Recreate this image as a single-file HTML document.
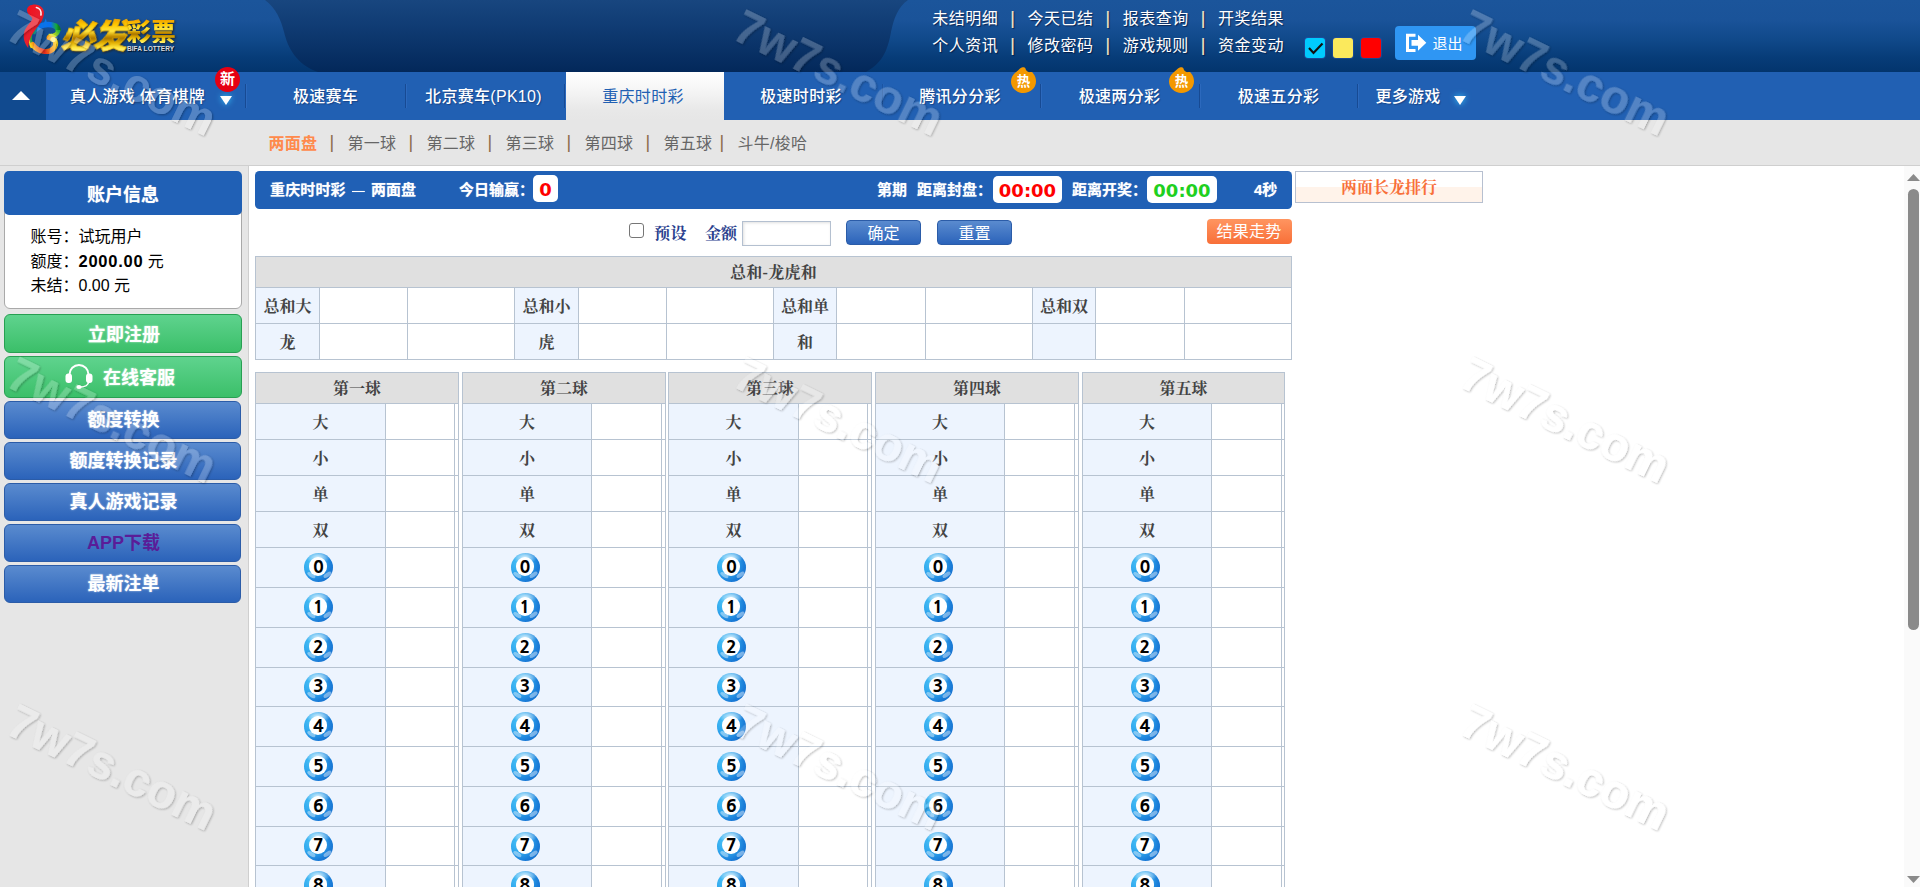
<!DOCTYPE html>
<html lang="zh-CN"><head><meta charset="utf-8"><title>必发彩票</title>
<style>
*{box-sizing:border-box;margin:0;padding:0}
html,body{width:1920px;height:887px;overflow:hidden;background:#fff}
body{font-family:"Liberation Sans","Noto Sans CJK SC",sans-serif;font-size:16px;color:#333;position:relative}
.abs{position:absolute}
#hd{position:absolute;left:0;top:0;width:1920px;height:72px;overflow:hidden}
#hd svg{position:absolute}
.toplinks{position:absolute;left:932.300px;top:4.600px;color:#fff;font-size:16px;line-height:27px;letter-spacing:.500px;white-space:nowrap;text-shadow:1px 1px 1px rgba(0,0,30,.55)}
.toplinks span.s{display:inline-block;width:29.200px;text-align:center;color:#f6e6c8;letter-spacing:0;font-size:17.500px;line-height:20px;-webkit-text-stroke:.150px #f6e6c8;position:relative;top:.500px;left:-.300px}
.sw{position:absolute;top:38px;width:20px;height:20px;border-radius:3px;box-shadow:0 0 0 1px rgba(40,80,170,.55)}
#logout{position:absolute;left:1395px;top:26px;width:81px;height:34px;border-radius:4px;background:#2f96f3;color:#fff;font-size:15px;line-height:36px}
#nav{position:absolute;left:0;top:72px;width:1920px;height:48px;background:#2160b3}
#nav .tg{position:absolute;left:0;top:0;width:46px;height:48px;background:#114a8f}
#nav .it{position:absolute;top:0;height:48px;line-height:49px;color:#fff;font-size:16px;font-weight:500;letter-spacing:.3px;text-align:center;white-space:nowrap;text-shadow:1px 1px 1px rgba(0,0,40,.3)}
#nav .sep{position:absolute;top:12px;width:2px;height:24px;background:#174a93;border-right:1px solid #2c69bd}
#nav .it.act{font-weight:400;background:linear-gradient(#ffffff 0%,#f6f6f6 35%,#e8e8e8 80%,#e6e6e6 100%);color:#2160b3;text-shadow:none}
#sub{position:absolute;left:0;top:120px;width:1920px;height:46px;background:#e6e6e6;border-bottom:1px solid #cfcfcf}
#sub .t{position:absolute;top:0;line-height:48px;font-size:16px;color:#666;white-space:nowrap;letter-spacing:.250px;margin-left:-.500px}
#side{position:absolute;left:0;top:166px;width:249px;height:721px;background:#e6e6e6;border-right:1px solid #cfcfcf}
#main{position:absolute;left:249px;top:166px;width:1671px;height:721px;background:#fff;overflow:hidden}

#logo .bf{font-family:"Noto Sans CJK SC",sans-serif;font-weight:900;font-size:33px;line-height:33px;letter-spacing:-2.200px;transform:skewX(-13deg) scaleX(1.050);transform-origin:0 100%;background:linear-gradient(#ee9800 0%,#ffc800 20%,#ffe640 40%,#c89200 55%,#a87400 62%,#e0ac00 74%,#ffe640 90%,#fff27a 100%);-webkit-background-clip:text;background-clip:text;color:transparent;-webkit-text-stroke:.700px rgba(236,176,0,.850);filter:drop-shadow(1px 1.500px .800px rgba(40,20,0,.700));white-space:nowrap}
#logo .cp{font-family:"Noto Sans CJK SC",sans-serif;font-weight:900;font-size:24.500px;line-height:24.500px;letter-spacing:.300px;background:linear-gradient(#ee9800 0%,#ffc800 22%,#ffe640 42%,#c89200 56%,#a87400 63%,#e0ac00 76%,#ffe640 92%,#fff27a 100%);-webkit-background-clip:text;background-clip:text;color:transparent;filter:drop-shadow(1px 1px .800px rgba(40,20,0,.700));white-space:nowrap}
#logo .en{font-family:"Liberation Sans",sans-serif;font-weight:bold;font-size:6.500px;line-height:7px;color:#dcdcdc;letter-spacing:.050px;white-space:nowrap;text-shadow:1px 1px 1px rgba(0,0,0,.800)}

.bnew{width:25px;height:25px;border-radius:50%;background:#e60012;color:#fff;font-weight:bold;font-size:15px;line-height:24px;text-align:center}
.bhot{width:25px;height:26px}
.bhot span{position:absolute;left:0;top:5px;width:25px;text-align:center;color:#fff;font-weight:bold;font-size:13.5px;line-height:20px}

.acc{position:absolute;left:4px;top:5px;width:238px;height:138px}
.acch{position:absolute;left:0;top:0;width:238px;height:44px;background:#2060b5;border-radius:5px;color:#fff;font-weight:bold;font-size:18px;line-height:48px;text-align:center;z-index:2;text-shadow:0 0 1px rgba(255,255,255,.6)}
.accb{position:absolute;left:0;top:38px;width:238px;height:100px;background:#fff;border:1px solid #a9a9a9;border-radius:0 0 6px 6px;padding:14.8px 0 0 25.5px;font-size:16px;line-height:24.6px;color:#000}
.accb div{height:24.6px;white-space:nowrap}
.accb b{font-size:16.5px;letter-spacing:.75px}
.gbtn{position:absolute;left:4px;width:238px;border:1px solid #27a052;border-radius:6px;background:linear-gradient(#5fd38e,#3bbf69);color:#fff;font-weight:bold;font-size:18px;text-align:center;text-shadow:0 0 2px rgba(255,255,255,.7)}
.bbtn{position:absolute;left:4px;width:237px;height:38px;border:1px solid #2b5ca8;border-radius:6px;background:linear-gradient(#5a8bcf,#2b63ba);color:#fff;font-weight:bold;font-size:18px;line-height:36.400px;text-indent:2px;text-align:center;text-shadow:0 0 2px rgba(255,255,255,.7)}

.tbar{position:absolute;background:#2060b5;border-radius:4.500px;color:#fff}
.tbar .tt{position:absolute;top:0;line-height:37.400px;font-size:15px;font-weight:bold;white-space:nowrap;text-shadow:0 0 1px rgba(255,255,255,.6)}
.tbar .wb{position:absolute;background:#fff;border-radius:5px;font-family:"DejaVu Sans","Liberation Sans",sans-serif;font-weight:bold;font-size:18px;line-height:29.6px;text-align:center}
.cbx{position:absolute;width:15px;height:15px;border:1.5px solid #767676;border-radius:3px;background:#fff}
.lbl{position:absolute;font-family:"Liberation Serif","Noto Serif CJK SC",serif;font-weight:bold;font-size:16px;line-height:24px;color:#2b3f8e;white-space:nowrap}
.inp{position:absolute;width:89px;height:25px;border:1px solid #b4c0d0;background:#fff;box-shadow:inset 1px 1px 3px rgba(0,0,0,.12)}
.btn{position:absolute;width:75px;height:25px;border:1px solid #2b5ca8;border-radius:4px;background:linear-gradient(#5a8bcf,#2b63ba);color:#fff;font-size:16px;line-height:25.5px;text-align:center}
.obtn{position:absolute;width:85px;height:25px;border-radius:4px;background:linear-gradient(#ff9560,#f86f38);color:#fff;font-size:16px;line-height:25px;text-align:center;letter-spacing:.300px;text-indent:-1px}
.tb{position:absolute;border:1px solid #b7c3d1;background:#fff;overflow:hidden;font-family:"Liberation Serif","Noto Serif CJK SC",serif;font-weight:bold;font-size:16px;color:#444}
.tb div{position:absolute}
.th{background:#e0e0e0;text-align:center}
.hl{height:1px;background:#b7c3d1}
.vl{width:1px;background:#b7c3d1}
.lc{background:#edf4fe;text-align:center;white-space:nowrap}
.lcb{background:#edf4fe}
.lt{height:35px;line-height:37px;text-align:center}
.ball{width:29.4px;height:29.2px;border-radius:50%;background:radial-gradient(ellipse 12px 6.500px at 14px 4.500px,rgba(255,255,255,.780) 0,rgba(255,255,255,.350) 60%,rgba(255,255,255,0) 100%),radial-gradient(circle at 28% 34%,#49c2f7 0,#2fa6ed 38%,#1a7cd8 68%,#0f62c2 100%)}
.ball::before,.ball::after{content:"";position:absolute;top:20px;width:8.500px;height:3.600px;border-radius:50%;background:rgba(255,255,255,.420)}
.ball::before{left:2.500px;transform:rotate(33deg)}
.ball::after{left:18.500px;transform:rotate(-33deg)}
.ball i{position:absolute;left:5.200px;top:4.200px;width:18.200px;height:18.400px;border-radius:50%;background:#fff}
.ball span{position:absolute;left:0;top:4.600px;width:28.400px;height:19px;line-height:19px;text-align:center;font-family:"NanumGothic","Liberation Sans",sans-serif;font-weight:800;font-size:17.500px;color:#000}
.rp{position:absolute;width:188px;height:32px;border:1px solid #b7c0d0;background:linear-gradient(#fff 0,#fff 50%,#fff3ea 50%,#fff3ea 100%);font-family:"Liberation Serif","Noto Serif CJK SC",serif;font-weight:bold;font-size:16px;line-height:32px;text-align:center;color:#f8703a}
.sbt{position:absolute;width:16px;height:721px;background:#fafafa}
.sbth{position:absolute;width:11px;height:441px;border-radius:6px;background:#8a8a8a}
</style></head><body>
<div id="hd">
<svg width="1920" height="72" viewBox="0 0 1920 72">
<defs>
<linearGradient id="gd" x1="0" y1="0" x2="0" y2="1"><stop offset="0" stop-color="#18467f"/><stop offset="0.35" stop-color="#103c74"/><stop offset="1" stop-color="#03285a"/></linearGradient>
<linearGradient id="gl" x1="0" y1="0" x2="0" y2="1"><stop offset="0" stop-color="#1b559b"/><stop offset="0.28" stop-color="#1a5399"/><stop offset="0.55" stop-color="#10498a"/><stop offset="0.8" stop-color="#073c78"/><stop offset="1" stop-color="#03356d"/></linearGradient>
</defs>
<rect width="1920" height="72" fill="url(#gd)"/>
<path d="M0 0H265C276 8 281 20 284 32C288 48 296 64 318 72H0Z" fill="url(#gl)"/>
<path d="M1920 0H908C898 7 894 18 891 32C888 48 884 62 866 72H1920Z" fill="url(#gl)"/>
</svg>
<div id="logo">
<svg class="abs" style="left:20px;top:0" width="48" height="58" viewBox="0 0 48 58">
<defs>
<linearGradient id="lr" x1="0" y1="0" x2="1" y2="1"><stop offset="0" stop-color="#f40a18"/><stop offset="0.5" stop-color="#e8202e"/><stop offset="1" stop-color="#d80010"/></linearGradient>
<linearGradient id="rb1" gradientUnits="userSpaceOnUse" x1="12" y1="0" x2="39" y2="0"><stop offset="0" stop-color="#1f9a2e"/><stop offset="0.25" stop-color="#0a74ea"/><stop offset="0.7" stop-color="#0a6ff0"/><stop offset="0.9" stop-color="#18a83a"/><stop offset="1" stop-color="#0d7a20"/></linearGradient>
<linearGradient id="rb2" gradientUnits="userSpaceOnUse" x1="38" y1="30" x2="28" y2="38"><stop offset="0" stop-color="#2fb43a"/><stop offset="0.5" stop-color="#c8e01c"/><stop offset="1" stop-color="#fff04a"/></linearGradient>
<linearGradient id="rb3" gradientUnits="userSpaceOnUse" x1="36" y1="36" x2="10" y2="46"><stop offset="0" stop-color="#ffe61e"/><stop offset="0.3" stop-color="#f59a14"/><stop offset="0.6" stop-color="#e8281e"/><stop offset="0.85" stop-color="#f08a18"/><stop offset="1" stop-color="#ffe61e"/></linearGradient>
</defs>
<path d="M10.500 35C9 39 9.500 44 11.500 48" stroke="#f4d818" stroke-width="1.600" fill="none"/>
<path d="M12 33C10.500 37 11 41 12.500 44" stroke="#28a838" stroke-width="1.600" fill="none"/>
<path d="M12.500 33.500C15 27.500 22 24.500 28 24.500C33.500 24.500 38 26.500 38.200 30.800" stroke="url(#rb1)" stroke-width="5.600" fill="none"/>
<path d="M25.800 18.500L28 26L22.500 26.500Z" fill="#0a74ea"/>
<path d="M38.200 30C38 34.500 33.500 36.200 28.500 36" stroke="url(#rb2)" stroke-width="4.400" fill="none"/>
<path d="M29 37.500C36 38.500 37.500 44 33.500 48.500C29 53.500 18 52.500 12.500 44.500" stroke="url(#rb3)" stroke-width="5" fill="none" stroke-linecap="round"/>
<circle cx="33" cy="39.500" r="2.600" fill="#fff8a0" opacity=".9"/>
<path d="M7 11C6.500 6.500 10.500 4.500 15 4.500C20 4.500 24.300 8 24 13.500C23.600 19.500 19.500 24.500 15.500 29.500C11.500 34.500 8.800 40 8.200 48C4.500 43.500 3 38 4 33C5.300 27 10 23.500 12.200 19.500C13 17 8 15.500 7 11Z" fill="url(#lr)"/>
<path d="M16.500 7.500C19.500 8 21.500 11 21 15" stroke="#fff" stroke-width="1.700" fill="none" stroke-linecap="round" opacity=".92"/>
</svg>
<div class="abs bf" style="left:60px;top:18.200px">必发</div>
<div class="abs cp" style="left:126.500px;top:18.500px">彩票</div>
<div class="abs en" style="left:127px;top:44.500px">BIFA LOTTERY</div>
</div>
<div class="toplinks">未结明细<span class="s">|</span>今天已结<span class="s">|</span>报表查询<span class="s">|</span>开奖结果<br>个人资讯<span class="s">|</span>修改密码<span class="s">|</span>游戏规则<span class="s">|</span>资金变动</div>
<div class="sw" style="left:1305px;background:#00cbff"><svg width="20" height="20" viewBox="0 0 20 20" style="position:absolute;left:0;top:0"><path d="M4 10L8.500 15L17.500 5.500" stroke="#111" stroke-width="2.200" fill="none"/></svg></div>
<div class="sw" style="left:1333px;background:#fbe95c"></div>
<div class="sw" style="left:1361px;background:#ff0000"></div>
<div id="logout"><svg class="abs" style="left:10px;top:7px" width="22" height="20" viewBox="0 0 22 20"><path d="M10.500 2.200H2.500V17.500H10.500" stroke="#fff" stroke-width="3" fill="none"/><path d="M6.500 7H13V1.800L21.300 9.800L13 17.800V12.800H6.500Z" fill="#fff"/></svg><span class="abs" style="left:37.500px;top:0">退出</span></div>
</div>
<div id="nav">
<div class="tg"><svg class="abs" style="left:12px;top:19px" width="18" height="9" viewBox="0 0 18 9"><path d="M0 9L9 0L18 9Z" fill="#fff"/></svg></div>
<div class="it" style="left:46px;width:200px"><span style="position:relative;left:-8.5px">真人游戏 体育棋牌</span></div>
<div class="it" style="left:246px;width:159px"><span style="position:relative;left:0px">极速赛车</span></div>
<div class="it" style="left:405px;width:161px"><span style="position:relative;left:-2px">北京赛车(PK10)</span></div>
<div class="it act" style="left:566px;width:158px"><span style="position:relative;left:-2px">重庆时时彩</span></div>
<div class="it" style="left:724px;width:158px"><span style="position:relative;left:-2px">极速时时彩</span></div>
<div class="it" style="left:882px;width:158px"><span style="position:relative;left:-1px">腾讯分分彩</span></div>
<div class="it" style="left:1040px;width:159px"><span style="position:relative;left:0px">极速两分彩</span></div>
<div class="it" style="left:1199px;width:159px"><span style="position:relative;left:0px">极速五分彩</span></div>
<div class="it" style="left:1358px;width:160px"><span style="position:relative;left:-30px">更多游戏</span></div>
<div class="sep" style="left:245px"></div>
<div class="sep" style="left:405px"></div>
<div class="sep" style="left:564px"></div>
<div class="sep" style="left:1040px"></div>
<div class="sep" style="left:1199px"></div>
<div class="sep" style="left:1357px"></div>
<div class="sep" style="left:882px;opacity:.5"></div>
<svg class="abs" style="left:220px;top:24px;filter:drop-shadow(0 0 3px #35c6ff)" width="12" height="9" viewBox="0 0 12 9"><path d="M0 0H12L6 9Z" fill="#fff"/></svg>
<svg class="abs" style="left:1454px;top:24px;filter:drop-shadow(0 0 3px #35c6ff)" width="12" height="9" viewBox="0 0 12 9"><path d="M0 0H12L6 9Z" fill="#fff"/></svg>
<div class="abs bnew" style="left:215px;top:-5px">新</div>
<div class="abs bhot" style="left:1011px;top:-5px"><svg class="abs" style="left:0;top:0" width="25" height="26" viewBox="0 0 25 26"><path d="M12.500 26C5.600 26 0 20.800 0 14.500C0 10.500 2 7.500 4.500 5.500C6 4.300 7.500 3 9 1.500C10.500 0.300 12.500 0 13.500 0.400C14.800 1 14.600 2.600 15.600 3.800C16.600 5 18 5.400 19.400 5C20.600 4.700 21.600 5 22 6.200C24 8.400 25 11.400 25 14.500C25 20.800 19.400 26 12.500 26Z" fill="#f39800"/></svg><span>热</span></div>
<div class="abs bhot" style="left:1169px;top:-5px"><svg class="abs" style="left:0;top:0" width="25" height="26" viewBox="0 0 25 26"><path d="M12.500 26C5.600 26 0 20.800 0 14.500C0 10.500 2 7.500 4.500 5.500C6 4.300 7.500 3 9 1.500C10.500 0.300 12.500 0 13.500 0.400C14.800 1 14.600 2.600 15.600 3.800C16.600 5 18 5.400 19.400 5C20.600 4.700 21.600 5 22 6.200C24 8.400 25 11.400 25 14.500C25 20.800 19.400 26 12.500 26Z" fill="#f39800"/></svg><span>热</span></div>
</div>
<div id="sub">
<span class="t" style="left:269px;color:#ff8a4c;font-weight:bold">两面盘</span>
<span class="t" style="left:348px">第一球</span>
<span class="t" style="left:427px">第二球</span>
<span class="t" style="left:506px">第三球</span>
<span class="t" style="left:585px">第四球</span>
<span class="t" style="left:664px">第五球</span>
<span class="t" style="left:330.0px;color:#8a6a4a;font-size:18px;line-height:44px">|</span>
<span class="t" style="left:409.0px;color:#8a6a4a;font-size:18px;line-height:44px">|</span>
<span class="t" style="left:488.0px;color:#8a6a4a;font-size:18px;line-height:44px">|</span>
<span class="t" style="left:567.0px;color:#8a6a4a;font-size:18px;line-height:44px">|</span>
<span class="t" style="left:646.0px;color:#8a6a4a;font-size:18px;line-height:44px">|</span>
<span class="t" style="left:720.0px;color:#8a6a4a;font-size:18px;line-height:44px">|</span>
<span class="t" style="left:738px">斗牛/梭哈</span>
</div>
<div id="side">
<div class="acc"><div class="acch">账户信息</div><div class="accb"><div>账号：<span>试玩用户</span></div><div>额度：<span><b>2000.00</b> 元</span></div><div>未结：<span>0.00 元</span></div></div></div>
<div class="gbtn" style="top:148px;height:39px;line-height:40.500px;text-indent:2px">立即注册</div>
<div class="gbtn" style="top:190px;height:42px;line-height:43.500px"><svg class="abs" style="left:60px;top:6px" width="28" height="27" viewBox="0 0 28 27"><path d="M4.5 13V11.5A9.5 9.5 0 0 1 23.5 11.5V13" stroke="#fff" stroke-width="1.900" fill="none"/><rect x="0.5" y="10.5" width="6.5" height="9.5" rx="3" fill="#fff"/><rect x="21" y="10.5" width="6.5" height="9.5" rx="3" fill="#fff"/><path d="M23.5 19C23.5 22 20 24 15 24" stroke="#fff" stroke-width="1.6" fill="none"/><ellipse cx="14" cy="24" rx="2.6" ry="1.9" fill="#fff"/></svg><span style="position:relative;left:16px">在线客服</span></div>
<div class="bbtn" style="top:235px">额度转换</div>
<div class="bbtn" style="top:276px">额度转换记录</div>
<div class="bbtn" style="top:317px">真人游戏记录</div>
<div class="bbtn" style="top:358px;color:#5a1d98;text-shadow:none">APP下载</div>
<div class="bbtn" style="top:399px">最新注单</div>
</div>
<div id="main">
<div class="tbar" style="left:6px;top:5px;width:1037px;height:38px">
<span class="tt" style="left:15px;letter-spacing:.15px">重庆时时彩</span>
<span class="tt" style="left:96.500px;font-weight:normal;transform:scaleX(.85);transform-origin:0 50%">—</span>
<span class="tt" style="left:116px">两面盘</span>
<span class="tt" style="left:204px">今日输赢：</span>
<span class="wb" style="left:278px;top:4px;width:25px;height:27px;color:#f00">0</span>
<span class="tt" style="left:622px">第期</span>
<span class="tt" style="left:662px">距离封盘：</span>
<span class="wb" style="left:738px;top:5px;width:69px;height:27px;color:#f00">00:00</span>
<span class="tt" style="left:817px">距离开奖：</span>
<span class="wb" style="left:892px;top:5px;width:70px;height:27px;color:#1fd01f">00:00</span>
<span class="tt" style="left:999px">4秒</span>
</div>
<div class="cbx" style="left:380px;top:57px"></div>
<span class="lbl" style="left:405px;top:56px;letter-spacing:.500px">预设</span>
<span class="lbl" style="left:456px;top:56px">金额</span>
<div class="inp" style="left:493px;top:55px"></div>
<div class="btn" style="left:597px;top:54px">确定</div>
<div class="btn" style="left:688px;top:54px">重置</div>
<div class="obtn" style="left:958px;top:53px">结果走势</div>
<div class="tb" style="left:6px;top:90px;width:1037px;height:104px">
<div class="th" style="left:0;top:0;width:1035px;height:30px;line-height:31px;letter-spacing:.3px">总和-龙虎和</div>
<div class="hl" style="left:0;top:30px;width:1035px"></div>
<div class="hl" style="left:0;top:66px;width:1035px"></div>
<div class="lc" style="left:0px;top:31px;width:63px;height:35px;line-height:38px">总和大</div>
<div class="lc" style="left:0px;top:67px;width:63px;height:35px;line-height:38px">龙</div>
<div class="vl" style="left:63px;top:31px;height:71px"></div>
<div class="vl" style="left:151px;top:31px;height:71px"></div>
<div class="vl" style="left:258px;top:31px;height:71px"></div>
<div class="lc" style="left:259px;top:31px;width:63px;height:35px;line-height:38px">总和小</div>
<div class="lc" style="left:259px;top:67px;width:63px;height:35px;line-height:38px">虎</div>
<div class="vl" style="left:322px;top:31px;height:71px"></div>
<div class="vl" style="left:410px;top:31px;height:71px"></div>
<div class="vl" style="left:517px;top:31px;height:71px"></div>
<div class="lc" style="left:518px;top:31px;width:62px;height:35px;line-height:38px">总和单</div>
<div class="lc" style="left:518px;top:67px;width:62px;height:35px;line-height:38px">和</div>
<div class="vl" style="left:580px;top:31px;height:71px"></div>
<div class="vl" style="left:669px;top:31px;height:71px"></div>
<div class="vl" style="left:776px;top:31px;height:71px"></div>
<div class="lc" style="left:777px;top:31px;width:62px;height:35px;line-height:38px">总和双</div>
<div class="lc" style="left:777px;top:67px;width:62px;height:35px;line-height:38px"></div>
<div class="vl" style="left:839px;top:31px;height:71px"></div>
<div class="vl" style="left:928px;top:31px;height:71px"></div>
</div>
<div class="tb" style="left:6px;top:206px;width:204px;height:560px;border-bottom:0">
<div class="th" style="left:0;top:0;width:202px;height:30px;line-height:32px">第一球</div>
<div class="lcb" style="left:0;top:31px;width:129px;height:540px"></div>
<div class="vl" style="left:129px;top:31px;height:540px"></div>
<div class="vl" style="left:198px;top:31px;height:540px"></div>
<div class="hl" style="left:0;top:30px;width:202px"></div>
<div class="hl" style="left:0;top:66px;width:202px"></div>
<div class="hl" style="left:0;top:102px;width:202px"></div>
<div class="hl" style="left:0;top:138px;width:202px"></div>
<div class="hl" style="left:0;top:174px;width:202px"></div>
<div class="hl" style="left:0;top:214px;width:202px"></div>
<div class="hl" style="left:0;top:254px;width:202px"></div>
<div class="hl" style="left:0;top:294px;width:202px"></div>
<div class="hl" style="left:0;top:333px;width:202px"></div>
<div class="hl" style="left:0;top:373px;width:202px"></div>
<div class="hl" style="left:0;top:413px;width:202px"></div>
<div class="hl" style="left:0;top:453px;width:202px"></div>
<div class="hl" style="left:0;top:492px;width:202px"></div>
<div class="hl" style="left:0;top:532px;width:202px"></div>
<div class="lt" style="left:0;top:31px;width:129px">大</div>
<div class="lt" style="left:0;top:67px;width:129px">小</div>
<div class="lt" style="left:0;top:103px;width:129px">单</div>
<div class="lt" style="left:0;top:139px;width:129px">双</div>
<div class="ball" style="left:48.0px;top:180.2px"><i></i><span>0</span></div>
<div class="ball" style="left:48.0px;top:220.2px"><i></i><span>1</span></div>
<div class="ball" style="left:48.0px;top:260.2px"><i></i><span>2</span></div>
<div class="ball" style="left:48.0px;top:299.7px"><i></i><span>3</span></div>
<div class="ball" style="left:48.0px;top:339.2px"><i></i><span>4</span></div>
<div class="ball" style="left:48.0px;top:379.2px"><i></i><span>5</span></div>
<div class="ball" style="left:48.0px;top:419.2px"><i></i><span>6</span></div>
<div class="ball" style="left:48.0px;top:458.7px"><i></i><span>7</span></div>
<div class="ball" style="left:48.0px;top:498.2px"><i></i><span>8</span></div>
</div>
<div class="tb" style="left:213px;top:206px;width:204px;height:560px;border-bottom:0">
<div class="th" style="left:0;top:0;width:202px;height:30px;line-height:32px">第二球</div>
<div class="lcb" style="left:0;top:31px;width:128px;height:540px"></div>
<div class="vl" style="left:128px;top:31px;height:540px"></div>
<div class="vl" style="left:198px;top:31px;height:540px"></div>
<div class="hl" style="left:0;top:30px;width:202px"></div>
<div class="hl" style="left:0;top:66px;width:202px"></div>
<div class="hl" style="left:0;top:102px;width:202px"></div>
<div class="hl" style="left:0;top:138px;width:202px"></div>
<div class="hl" style="left:0;top:174px;width:202px"></div>
<div class="hl" style="left:0;top:214px;width:202px"></div>
<div class="hl" style="left:0;top:254px;width:202px"></div>
<div class="hl" style="left:0;top:294px;width:202px"></div>
<div class="hl" style="left:0;top:333px;width:202px"></div>
<div class="hl" style="left:0;top:373px;width:202px"></div>
<div class="hl" style="left:0;top:413px;width:202px"></div>
<div class="hl" style="left:0;top:453px;width:202px"></div>
<div class="hl" style="left:0;top:492px;width:202px"></div>
<div class="hl" style="left:0;top:532px;width:202px"></div>
<div class="lt" style="left:0;top:31px;width:128px">大</div>
<div class="lt" style="left:0;top:67px;width:128px">小</div>
<div class="lt" style="left:0;top:103px;width:128px">单</div>
<div class="lt" style="left:0;top:139px;width:128px">双</div>
<div class="ball" style="left:47.5px;top:180.2px"><i></i><span>0</span></div>
<div class="ball" style="left:47.5px;top:220.2px"><i></i><span>1</span></div>
<div class="ball" style="left:47.5px;top:260.2px"><i></i><span>2</span></div>
<div class="ball" style="left:47.5px;top:299.7px"><i></i><span>3</span></div>
<div class="ball" style="left:47.5px;top:339.2px"><i></i><span>4</span></div>
<div class="ball" style="left:47.5px;top:379.2px"><i></i><span>5</span></div>
<div class="ball" style="left:47.5px;top:419.2px"><i></i><span>6</span></div>
<div class="ball" style="left:47.5px;top:458.7px"><i></i><span>7</span></div>
<div class="ball" style="left:47.5px;top:498.2px"><i></i><span>8</span></div>
</div>
<div class="tb" style="left:419px;top:206px;width:204px;height:560px;border-bottom:0">
<div class="th" style="left:0;top:0;width:202px;height:30px;line-height:32px">第三球</div>
<div class="lcb" style="left:0;top:31px;width:129px;height:540px"></div>
<div class="vl" style="left:129px;top:31px;height:540px"></div>
<div class="vl" style="left:198px;top:31px;height:540px"></div>
<div class="hl" style="left:0;top:30px;width:202px"></div>
<div class="hl" style="left:0;top:66px;width:202px"></div>
<div class="hl" style="left:0;top:102px;width:202px"></div>
<div class="hl" style="left:0;top:138px;width:202px"></div>
<div class="hl" style="left:0;top:174px;width:202px"></div>
<div class="hl" style="left:0;top:214px;width:202px"></div>
<div class="hl" style="left:0;top:254px;width:202px"></div>
<div class="hl" style="left:0;top:294px;width:202px"></div>
<div class="hl" style="left:0;top:333px;width:202px"></div>
<div class="hl" style="left:0;top:373px;width:202px"></div>
<div class="hl" style="left:0;top:413px;width:202px"></div>
<div class="hl" style="left:0;top:453px;width:202px"></div>
<div class="hl" style="left:0;top:492px;width:202px"></div>
<div class="hl" style="left:0;top:532px;width:202px"></div>
<div class="lt" style="left:0;top:31px;width:129px">大</div>
<div class="lt" style="left:0;top:67px;width:129px">小</div>
<div class="lt" style="left:0;top:103px;width:129px">单</div>
<div class="lt" style="left:0;top:139px;width:129px">双</div>
<div class="ball" style="left:48.0px;top:180.2px"><i></i><span>0</span></div>
<div class="ball" style="left:48.0px;top:220.2px"><i></i><span>1</span></div>
<div class="ball" style="left:48.0px;top:260.2px"><i></i><span>2</span></div>
<div class="ball" style="left:48.0px;top:299.7px"><i></i><span>3</span></div>
<div class="ball" style="left:48.0px;top:339.2px"><i></i><span>4</span></div>
<div class="ball" style="left:48.0px;top:379.2px"><i></i><span>5</span></div>
<div class="ball" style="left:48.0px;top:419.2px"><i></i><span>6</span></div>
<div class="ball" style="left:48.0px;top:458.7px"><i></i><span>7</span></div>
<div class="ball" style="left:48.0px;top:498.2px"><i></i><span>8</span></div>
</div>
<div class="tb" style="left:626px;top:206px;width:204px;height:560px;border-bottom:0">
<div class="th" style="left:0;top:0;width:202px;height:30px;line-height:32px">第四球</div>
<div class="lcb" style="left:0;top:31px;width:128px;height:540px"></div>
<div class="vl" style="left:128px;top:31px;height:540px"></div>
<div class="vl" style="left:198px;top:31px;height:540px"></div>
<div class="hl" style="left:0;top:30px;width:202px"></div>
<div class="hl" style="left:0;top:66px;width:202px"></div>
<div class="hl" style="left:0;top:102px;width:202px"></div>
<div class="hl" style="left:0;top:138px;width:202px"></div>
<div class="hl" style="left:0;top:174px;width:202px"></div>
<div class="hl" style="left:0;top:214px;width:202px"></div>
<div class="hl" style="left:0;top:254px;width:202px"></div>
<div class="hl" style="left:0;top:294px;width:202px"></div>
<div class="hl" style="left:0;top:333px;width:202px"></div>
<div class="hl" style="left:0;top:373px;width:202px"></div>
<div class="hl" style="left:0;top:413px;width:202px"></div>
<div class="hl" style="left:0;top:453px;width:202px"></div>
<div class="hl" style="left:0;top:492px;width:202px"></div>
<div class="hl" style="left:0;top:532px;width:202px"></div>
<div class="lt" style="left:0;top:31px;width:128px">大</div>
<div class="lt" style="left:0;top:67px;width:128px">小</div>
<div class="lt" style="left:0;top:103px;width:128px">单</div>
<div class="lt" style="left:0;top:139px;width:128px">双</div>
<div class="ball" style="left:47.5px;top:180.2px"><i></i><span>0</span></div>
<div class="ball" style="left:47.5px;top:220.2px"><i></i><span>1</span></div>
<div class="ball" style="left:47.5px;top:260.2px"><i></i><span>2</span></div>
<div class="ball" style="left:47.5px;top:299.7px"><i></i><span>3</span></div>
<div class="ball" style="left:47.5px;top:339.2px"><i></i><span>4</span></div>
<div class="ball" style="left:47.5px;top:379.2px"><i></i><span>5</span></div>
<div class="ball" style="left:47.5px;top:419.2px"><i></i><span>6</span></div>
<div class="ball" style="left:47.5px;top:458.7px"><i></i><span>7</span></div>
<div class="ball" style="left:47.5px;top:498.2px"><i></i><span>8</span></div>
</div>
<div class="tb" style="left:833px;top:206px;width:203px;height:560px;border-bottom:0">
<div class="th" style="left:0;top:0;width:201px;height:30px;line-height:32px">第五球</div>
<div class="lcb" style="left:0;top:31px;width:128px;height:540px"></div>
<div class="vl" style="left:128px;top:31px;height:540px"></div>
<div class="vl" style="left:198px;top:31px;height:540px"></div>
<div class="hl" style="left:0;top:30px;width:201px"></div>
<div class="hl" style="left:0;top:66px;width:201px"></div>
<div class="hl" style="left:0;top:102px;width:201px"></div>
<div class="hl" style="left:0;top:138px;width:201px"></div>
<div class="hl" style="left:0;top:174px;width:201px"></div>
<div class="hl" style="left:0;top:214px;width:201px"></div>
<div class="hl" style="left:0;top:254px;width:201px"></div>
<div class="hl" style="left:0;top:294px;width:201px"></div>
<div class="hl" style="left:0;top:333px;width:201px"></div>
<div class="hl" style="left:0;top:373px;width:201px"></div>
<div class="hl" style="left:0;top:413px;width:201px"></div>
<div class="hl" style="left:0;top:453px;width:201px"></div>
<div class="hl" style="left:0;top:492px;width:201px"></div>
<div class="hl" style="left:0;top:532px;width:201px"></div>
<div class="lt" style="left:0;top:31px;width:128px">大</div>
<div class="lt" style="left:0;top:67px;width:128px">小</div>
<div class="lt" style="left:0;top:103px;width:128px">单</div>
<div class="lt" style="left:0;top:139px;width:128px">双</div>
<div class="ball" style="left:47.5px;top:180.2px"><i></i><span>0</span></div>
<div class="ball" style="left:47.5px;top:220.2px"><i></i><span>1</span></div>
<div class="ball" style="left:47.5px;top:260.2px"><i></i><span>2</span></div>
<div class="ball" style="left:47.5px;top:299.7px"><i></i><span>3</span></div>
<div class="ball" style="left:47.5px;top:339.2px"><i></i><span>4</span></div>
<div class="ball" style="left:47.5px;top:379.2px"><i></i><span>5</span></div>
<div class="ball" style="left:47.5px;top:419.2px"><i></i><span>6</span></div>
<div class="ball" style="left:47.5px;top:458.7px"><i></i><span>7</span></div>
<div class="ball" style="left:47.5px;top:498.2px"><i></i><span>8</span></div>
</div>
<div class="rp" style="left:1046px;top:5px">两面长龙排行</div>
<div class="sbt" style="left:1655px;top:0"></div>
<div class="sbth" style="left:1659px;top:23px"></div>
<svg class="abs" style="left:1658px;top:8px" width="13" height="7" viewBox="0 0 13 7"><path d="M0 7L6.500 0L13 7Z" fill="#8a8a8a"/></svg>
<svg class="abs" style="left:1658px;top:710px" width="13" height="7" viewBox="0 0 13 7"><path d="M0 0L6.500 7L13 0Z" fill="#8a8a8a"/></svg>
</div>
<svg id="wm" width="1920" height="887" viewBox="0 0 1920 887" style="position:absolute;left:0;top:0;pointer-events:none;z-index:50">
<defs><filter id="wmf" filterUnits="userSpaceOnUse" x="0" y="0" width="1920" height="887"><feGaussianBlur in="SourceAlpha" stdDeviation="0.800" result="b"/><feOffset in="b" dx="1.100" dy="1.300" result="o"/><feComposite in="o" in2="SourceAlpha" operator="out" result="sh"/><feColorMatrix in="sh" type="matrix" values="0 0 0 0 0  0 0 0 0 0  0 0 0 0 0  0 0 0 1.300 0" result="sh2"/><feMerge><feMergeNode in="sh2"/><feMergeNode in="SourceGraphic"/></feMerge></filter></defs>
<g opacity=".235"><g filter="url(#wmf)" font-family="Liberation Sans, sans-serif" font-size="47.200" font-weight="bold" fill="#fff">
<text transform="translate(3.5 38.0) rotate(26)">7w7s.com</text>
<text transform="translate(730.1 38.0) rotate(26)">7w7s.com</text>
<text transform="translate(1456.7 38.0) rotate(26)">7w7s.com</text>
<text transform="translate(3.5 385.3) rotate(26)">7w7s.com</text>
<text transform="translate(730.1 385.3) rotate(26)">7w7s.com</text>
<text transform="translate(1456.7 385.3) rotate(26)">7w7s.com</text>
<text transform="translate(3.5 732.6) rotate(26)">7w7s.com</text>
<text transform="translate(730.1 732.6) rotate(26)">7w7s.com</text>
<text transform="translate(1456.7 732.6) rotate(26)">7w7s.com</text>
</g></g></svg>
</body></html>
